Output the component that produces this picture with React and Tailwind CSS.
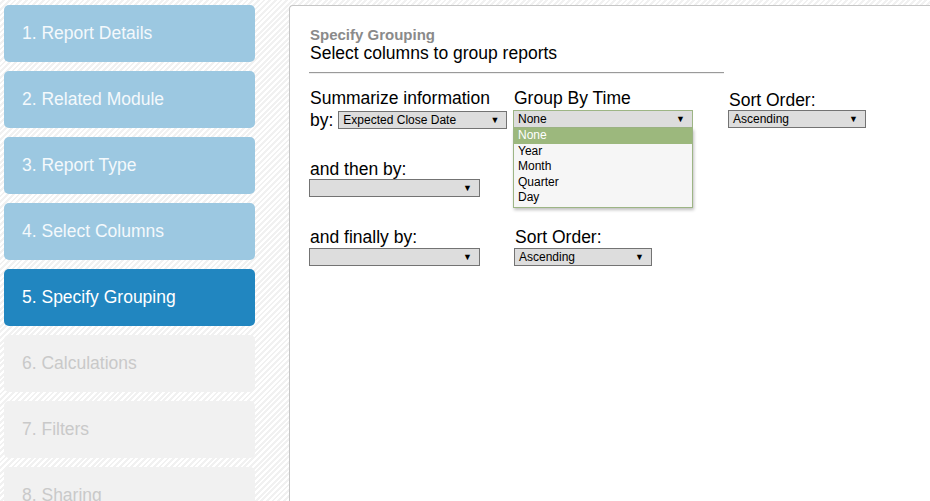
import React from "react";

const steps = [
  { label: "1. Report Details", state: "done" },
  { label: "2. Related Module", state: "done" },
  { label: "3. Report Type", state: "done" },
  { label: "4. Select Columns", state: "done" },
  { label: "5. Specify Grouping", state: "active" },
  { label: "6. Calculations", state: "todo" },
  { label: "7. Filters", state: "todo" },
  { label: "8. Sharing", state: "todo" },
];

function Step({ label, state }) {
  const cls =
    state === "active"
      ? "bg-[#2186c0] text-white"
      : state === "done"
      ? "bg-[#9cc8e1] text-[#f4f9fc]"
      : "bg-[#f1f1f1] text-[#c9c9c9]";
  return (
    <div className={`h-[57px] shrink-0 rounded-[5px] flex items-center pl-[18px] text-[17.5px] ${cls}`}>
      {label}
    </div>
  );
}

function Select({ value = "", width, focus = false }) {
  return (
    <div
      className={`h-[18px] flex items-center justify-between pl-[4px] pr-[7px] bg-[#dddddd] border text-[12px] leading-none text-black ${
        focus ? "border-[#9db585]" : "border-[#737373]"
      }`}
      style={{ width }}
    >
      <span>{value}</span>
      <span className="text-[9px]">▼</span>
    </div>
  );
}

export default function App() {
  return (
    <div className="w-[930px] h-[501px] overflow-hidden flex bg-[repeating-linear-gradient(135deg,#ffffff_0px,#ffffff_2px,#f1f1f1_2px,#f1f1f1_4px)] font-['Liberation_Sans',Arial,sans-serif]">
      <div className="w-[251px] ml-[4px] pt-[5px] flex flex-col gap-[9px] shrink-0">
        {steps.map((s) => (
          <Step key={s.label} {...s} />
        ))}
      </div>
      <div className="ml-[34px] mt-[5px] flex-1 bg-white border-l border-t border-[#c6c6c6] rounded-tl-[4px] pl-[20px] pt-[20px] text-[#111]">
        <div className="text-[15px] leading-[17px] font-bold text-[#8a8a8a]">Specify Grouping</div>
        <div className="text-[17.5px] leading-[20px] text-black">Select columns to group reports</div>
        <div className="mt-[9px] -ml-[1px] w-[415px] border-t border-[#9a9a9a] border-b border-b-[#eeeeee] h-[2px]" />

        <div className="mt-[14px] flex text-black">
          <div className="w-[204px]">
            <div className="text-[17.5px] leading-[20px]">Summarize information</div>
            <div className="flex items-end gap-[5px] mt-[2px]">
              <span className="text-[17.5px] leading-[20px]">by:</span>
              <div className="mb-[1px]">
                <Select value="Expected Close Date" width={169} />
              </div>
            </div>
          </div>
          <div className="w-[215px] -ml-[1px] relative">
            <div className="text-[17.5px] leading-[20px] pl-[1px]">Group By Time</div>
            <div className="mt-[2px]">
              <Select value="None" width={180} focus />
            </div>
            <div className="absolute left-0 top-[40px] w-[180px] bg-[#f6f6f6] border border-[#9db585] border-t-0 shadow-[1px_2px_3px_rgba(0,0,0,0.25)] text-[12px] leading-[15.5px] pb-[1px]">
              <div className="bg-[#9cb87d] text-white pl-[4px]">None</div>
              <div className="pl-[4px]">Year</div>
              <div className="pl-[4px]">Month</div>
              <div className="pl-[4px]">Quarter</div>
              <div className="pl-[4px]">Day</div>
            </div>
          </div>
          <div className="pt-[2px]">
            <div className="text-[17.5px] leading-[20px] pl-[1px]">Sort Order:</div>
            <Select value="Ascending" width={138} />
          </div>
        </div>

        <div className="mt-[29px] -ml-[1px] text-black">
          <div className="text-[17.5px] leading-[20px] pl-[1px]">and then by:</div>
          <Select width={171} />
        </div>

        <div className="mt-[30px] -ml-[1px] flex text-black">
          <div className="w-[205px]">
            <div className="text-[17.5px] leading-[20px] pl-[1px]">and finally by:</div>
            <div className="mt-[1px]">
              <Select width={171} />
            </div>
          </div>
          <div>
            <div className="text-[17.5px] leading-[20px] pl-[1px]">Sort Order:</div>
            <div className="mt-[1px]">
              <Select value="Ascending" width={138} />
            </div>
          </div>
        </div>
      </div>
    </div>
  );
}
